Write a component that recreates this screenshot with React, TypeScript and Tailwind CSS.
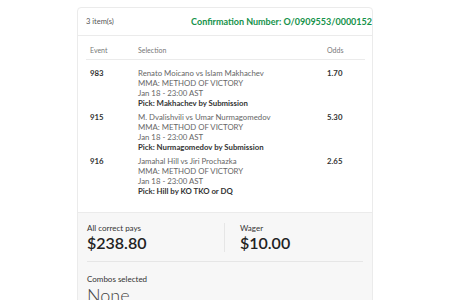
import React from "react";

const rows = [
  {
    ev: "983",
    match: "Renato Moicano vs Islam Makhachev",
    pick: "Pick: Makhachev by Submission",
    odds: "1.70",
  },
  {
    ev: "915",
    match: "M. Dvalishvili vs Umar Nurmagomedov",
    pick: "Pick: Nurmagomedov by Submission",
    odds: "5.30",
  },
  {
    ev: "916",
    match: "Jamahal Hill vs Jiri Prochazka",
    pick: "Pick: Hill by KO TKO or DQ",
    odds: "2.65",
  },
];

export default function App() {
  return (
    <div
      className="w-[452px] h-[300px] bg-white overflow-hidden"
      style={{ fontFamily: "Lato, 'Open Sans', sans-serif" }}
    >
      <div className="ml-[77px] mt-[7px] w-[296px] border border-[#ebebeb] rounded-[4px] overflow-hidden bg-white">
        {/* header */}
        <div className="h-[28px] flex items-center pl-[8px] border-b border-[#ebebeb]">
          <span className="text-[7.5px] text-[#555]">3 item(s)</span>
          <span className="ml-auto whitespace-nowrap text-[9px] font-bold text-[#15924a] shrink-0">
            Confirmation Number: O/0909553/0000152
          </span>
        </div>
        {/* table */}
        <div className="pl-[8px] pr-[7px] pb-[16px]">
          <div className="flex h-[24px] items-end pb-[4px] border-b border-[#ebebeb] text-[7px] leading-[10px] text-[#777]">
            <div className="w-[52px] pl-[4px]">Event</div>
            <div className="w-[189px]">Selection</div>
            <div>Odds</div>
          </div>
          <div className="pt-[8px] flex flex-col gap-[4px]">
            {rows.map((r) => (
              <div key={r.ev} className="flex text-[7.8px] leading-[10px]">
                <div className="w-[52px] pl-[4px] font-bold text-[#333]">{r.ev}</div>
                <div className="w-[189px] text-[#666]">
                  <div>{r.match}</div>
                  <div>MMA: METHOD OF VICTORY</div>
                  <div>Jan 18 - 23:00 AST</div>
                  <div className="font-bold text-[#333]">{r.pick}</div>
                </div>
                <div className="font-bold text-[#333]">{r.odds}</div>
              </div>
            ))}
          </div>
        </div>
        {/* summary */}
        <div className="bg-[#f7f7f7] border-t border-[#ebebeb] px-[9px] pt-[10px] h-[120px]">
          <div className="flex pb-[9px] border-b border-[#e6e6e6]">
            <div className="w-[138px] border-r border-[#e6e6e6] flex flex-col">
              <span className="text-[8px] leading-[11px] text-[#333]">All correct pays</span>
              <span className="text-[16px] leading-[18px] font-semibold text-[#222]">$238.80</span>
            </div>
            <div className="pl-[15px] flex flex-col">
              <span className="text-[8px] leading-[11px] text-[#333]">Wager</span>
              <span className="text-[16px] leading-[18px] font-semibold text-[#222]">$10.00</span>
            </div>
          </div>
          <div className="pt-[12px] flex flex-col">
            <span className="text-[8px] leading-[11px] text-[#333]">Combos selected</span>
            <span className="text-[18px] leading-[20px] font-light text-[#444]">None</span>
          </div>
        </div>
      </div>
    </div>
  );
}
